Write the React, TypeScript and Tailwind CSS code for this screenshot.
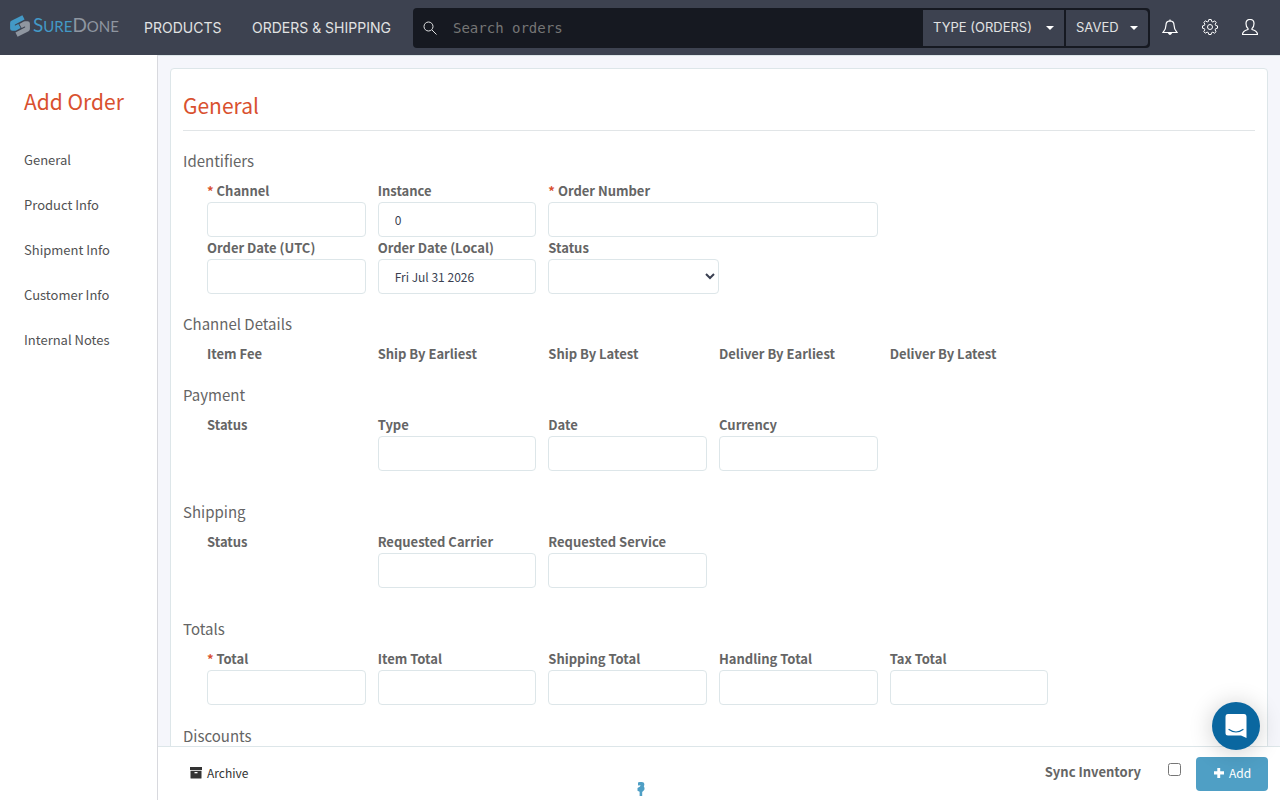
import type { ReactNode } from 'react'

const links = ['General', 'Product Info', 'Shipment Info', 'Customer Info', 'Internal Notes']

function Section({ title, className, children }: { title: string; className?: string; children?: ReactNode }) {
  return (
    <section className={className}>
      <h3 className="h-[38px] pt-2 text-[15px] leading-[22px]">{title}</h3>
      <div className="grid grid-cols-6 gap-x-3 pl-6 pr-9">{children}</div>
    </section>
  )
}

type FieldProps = {
  id: string
  label: string
  required?: boolean
  value?: string
  className?: string
}

function Field({ id, label, required, value, className }: FieldProps) {
  return (
    <div className={className}>
      <label htmlFor={id} className="block h-[22px] text-[13px] leading-[22px] font-bold whitespace-nowrap">
        {required && <span className="text-[#d9512f]">* </span>}
        {label}
      </label>
      <input
        id={id}
        type="text"
        defaultValue={value}
        className="block h-[35px] w-full rounded border border-[#dde6e9] bg-white px-4 text-[12px] text-[#3a3f51] outline-none"
      />
    </div>
  )
}

function Caption({ label }: { label: string }) {
  return <div className="h-[22px] text-[13px] leading-[22px] font-bold whitespace-nowrap">{label}</div>
}

function Logo() {
  return (
    <a href="#" aria-label="SureDone" className="flex w-[110px] items-center gap-[3px] pb-1 font-['Lato',sans-serif]">
      <svg viewBox="0 0 20 22" className="h-[22px] w-5 shrink-0" fill="none" strokeWidth="4.8" strokeLinejoin="round">
        <path d="M13.5 2.4 L2.5 8 V13.4 H5 L9.5 11" stroke="#4399c6" />
        <path d="M6.5 19.6 L17.5 14 V8.6 H15 L10.5 11" stroke="#8f96a0" />
      </svg>
      <span className="text-[19px] leading-6 text-[#4399c6]">
        S<span className="text-[15px]">URE</span>
        <span className="text-[#8f96a0]">D<span className="text-[15px]">ONE</span></span>
      </span>
    </a>
  )
}

function Caret() {
  return <span className="border-x-4 border-t-4 border-x-transparent border-t-white" />
}

function Header() {
  return (
    <header className="flex h-[55px] shrink-0 items-center bg-[#3d4250] pl-[10px] pr-[10px] font-['Inter',sans-serif] text-[#e1e2e3]">
      <Logo />
      <nav className="ml-6 flex text-[14px] whitespace-nowrap">
        <a href="#" className="w-[108px]">PRODUCTS</a>
        <a href="#" className="w-[161px]">ORDERS &amp; SHIPPING</a>
      </nav>
      <form className="flex h-10 flex-1 items-center gap-0.5 rounded bg-[#161921] p-0.5">
        <svg viewBox="0 0 14 14" className="ml-2 h-[14px] w-[14px] shrink-0" fill="none" stroke="#e1e2e3">
          <circle cx="5.5" cy="5.5" r="4.5" />
          <path d="M9 9 L13.5 13.5" />
        </svg>
        <input
          type="text"
          aria-label="Search orders"
          placeholder="Search orders"
          className="h-full min-w-0 flex-1 bg-transparent px-[14px] font-['DejaVu_Sans_Mono',monospace] text-[14px] outline-none placeholder:text-[#757575]"
        />
        <button type="button" className="flex h-full w-[141px] items-center justify-between bg-[#3d4250] px-[10px] text-[13px]">
          TYPE (ORDERS) <Caret />
        </button>
        <button type="button" className="flex h-full w-[82px] items-center justify-between rounded-r bg-[#3d4250] px-[10px] text-[13px]">
          SAVED <Caret />
        </button>
      </form>
      <div className="flex pb-0.5">
        <button type="button" aria-label="Notifications" className="flex w-10 justify-center">
          <svg viewBox="0 0 16 16" className="h-4 w-4" fill="none" stroke="#fff" strokeWidth="1.2">
            <path d="M8 0.5 V1.8 M8 1.8 C5 2 4 4 4 6 C4 10 3.2 11 1 13.5 H15 C12.8 11 12 10 12 6 C12 4 11 2 8 1.8Z" />
            <path d="M6.5 14 Q8 16.6 9.5 14Z" fill="#fff" />
          </svg>
        </button>
        <button type="button" aria-label="Settings" className="flex w-10 justify-center">
          <svg viewBox="0 0 16 16" className="h-4 w-4" fill="none" stroke="#fff">
            <path d="M6.8 0.5h2.4l.5 2 1.2.5 1.8-1.1 1.5 1.6-1 1.7.5 1.3 1.8.4v2.3l-1.9.5-.5 1.2 1 1.8-1.6 1.5-1.7-1-1.2.5-.5 1.8H6.8l-.5-1.9-1.2-.5-1.8 1.1-1.5-1.6 1-1.8-.5-1.2-1.8-.4V6.9l1.9-.5.5-1.3-1.1-1.7 1.6-1.5 1.8 1 1.2-.4Z" />
            <circle cx="8" cy="8" r="2.5" />
          </svg>
        </button>
        <button type="button" aria-label="Account" className="flex w-10 justify-center">
          <svg viewBox="0 0 16 16" className="h-4 w-4" fill="none" stroke="#fff" strokeWidth="1.2">
            <path d="M6 9.5 C4.5 8.5 4 7 4 4.5 C4 2 5.5 0.5 8 0.5 S12 2 12 4.5 C12 7 11.5 8.5 10 9.5 V10.5 C13 11.5 15.5 12 15.5 15.5 H0.5 C0.5 12 3 11.5 6 10.5Z" />
          </svg>
        </button>
      </div>
    </header>
  )
}

function Footer() {
  return (
    <footer className="relative flex h-[54px] shrink-0 items-center justify-between border-t border-[#dde6e9] bg-white pl-8 pr-3">
      <button type="button" className="flex items-center gap-[5px] pb-0.5 text-[12px] text-[#333]">
        <svg viewBox="0 0 12 12" className="h-3 w-3" fill="#333">
          <path d="M0 0 H12 V3 H0Z M.5 3.7 H11.5 V11 Q11.5 11.5 11 11.5 H1 Q.5 11.5 .5 11Z" />
          <path d="M4.5 5 H7.5 V6.3 H4.5Z" fill="#fff" />
        </svg>
        Archive
      </button>
      <div className="flex items-center">
        <label htmlFor="sync" className="pb-1 text-[13px] font-bold">Sync Inventory</label>
        <input id="sync" type="checkbox" className="ml-[27px] mr-[15px] mb-2 h-[13px] w-[13px]" />
        <button type="button" className="flex h-[34px] w-[72px] items-center justify-center gap-1 rounded-sm bg-[#4f9fc5] pb-0.5 text-[12px] text-white">
          <svg viewBox="0 0 12 12" className="h-3 w-3" fill="#fff">
            <path d="M4.3 1 H7.2 V4.3 H11 V7.4 H7.2 V11 H4.3 V7.4 H1 V4.3 H4.3Z" />
          </svg>
          Add
        </button>
      </div>
      <button type="button" aria-label="Help" className="absolute inset-x-0 bottom-1 mx-auto h-[14px] w-2 -translate-x-[78px]">
        <svg viewBox="0 0 8 14" className="h-[14px] w-2" fill="#4f9fc5">
          <path d="M1 0.5 Q4 -0.8 6.6 0.6 Q8 2.5 6.8 4.2 Q8.2 6.5 7 8.2 L5.2 10 V14 H2.6 V9.8 L0.5 8.8 V6 L3 4.6 L3.6 3.2 L1 3.4Z" />
        </svg>
      </button>
    </footer>
  )
}

export default function App() {
  return (
    <div className="flex h-screen flex-col overflow-hidden bg-[#f5f6fb] font-['Noto_Sans_CJK_JP',sans-serif] text-[#656565]">
      <Header />
      <div className="flex min-h-0 flex-1">
        <aside className="w-[158px] shrink-0 border-r border-[#d8d9de] bg-white pl-6 pt-[31px]">
          <h1 className="text-[21px] leading-[30px] text-[#d9512f]">Add Order</h1>
          <nav className="mt-[34px] flex flex-col gap-[25px] text-[13px] leading-5 text-[#515253]">
            {links.map((l) => (
              <a key={l} href="#">{l}</a>
            ))}
          </nav>
        </aside>

        <div className="flex min-w-0 flex-1 flex-col">
          <main className="min-h-0 flex-1 overflow-hidden border-t border-[#dde6e9] px-3 pt-3">
            <div className="rounded border border-[#dde6e9] bg-white px-3 pt-3">
              <h2 className="h-[50px] border-b border-[#e1e5e7] pt-[9px] text-[21px] leading-[30px] text-[#d9512f]">General</h2>

              <Section title="Identifiers" className="mt-[11px] mb-[11px]">
                <Field id="channel" label="Channel" required />
                <Field id="instance" label="Instance" value="0" />
                <Field id="order" label="Order Number" required className="col-span-2" />
                <Field id="dateutc" label="Order Date (UTC)" className="col-start-1" />
                <Field id="datelocal" label="Order Date (Local)" value="Fri Jul 31 2026" />
                <div className="-mr-3">
                  <label htmlFor="status" className="block h-[22px] text-[13px] leading-[22px] font-bold">Status</label>
                  <select id="status" className="block h-[35px] w-full rounded border border-[#dde6e9] bg-white text-[12px] text-[#3a3f51]">
                    <option></option>
                  </select>
                </div>
              </Section>

              <Section title="Channel Details" className="mb-[11px]">
                <Caption label="Item Fee" />
                <Caption label="Ship By Earliest" />
                <Caption label="Ship By Latest" />
                <Caption label="Deliver By Earliest" />
                <Caption label="Deliver By Latest" />
              </Section>

              <Section title="Payment" className="mb-[22px]">
                <Caption label="Status" />
                <Field id="ptype" label="Type" />
                <Field id="pdate" label="Date" />
                <Field id="currency" label="Currency" />
              </Section>

              <Section title="Shipping" className="mb-[22px]">
                <Caption label="Status" />
                <Field id="carrier" label="Requested Carrier" />
                <Field id="service" label="Requested Service" />
              </Section>

              <Section title="Totals" className="mb-3">
                <Field id="total" label="Total" required />
                <Field id="itemtotal" label="Item Total" />
                <Field id="shiptotal" label="Shipping Total" />
                <Field id="handtotal" label="Handling Total" />
                <Field id="taxtotal" label="Tax Total" />
              </Section>

              <Section title="Discounts" />
            </div>
          </main>
          <Footer />
        </div>
      </div>

      {/* Chat launcher floats over the page */}
      <button
        type="button"
        aria-label="Open chat"
        className="fixed right-5 bottom-[50px] flex h-12 w-12 items-center justify-center rounded-full bg-[#0a67a0] shadow-[0_2px_24px_rgba(0,0,0,0.2)]"
      >
        <svg viewBox="0 0 22 24" className="h-6 w-[22px]">
          <path d="M3 0 H19 Q21.5 0 21.5 3 V24 L16 21.5 H3 Q0.5 21.5 0.5 19 V3 Q0.5 0 3 0Z" fill="#fff" />
          <path d="M4 15.5 Q11 20.5 18 15.5" fill="none" stroke="#0a67a0" strokeWidth="1.2" strokeLinecap="round" />
        </svg>
      </button>
    </div>
  )
}
